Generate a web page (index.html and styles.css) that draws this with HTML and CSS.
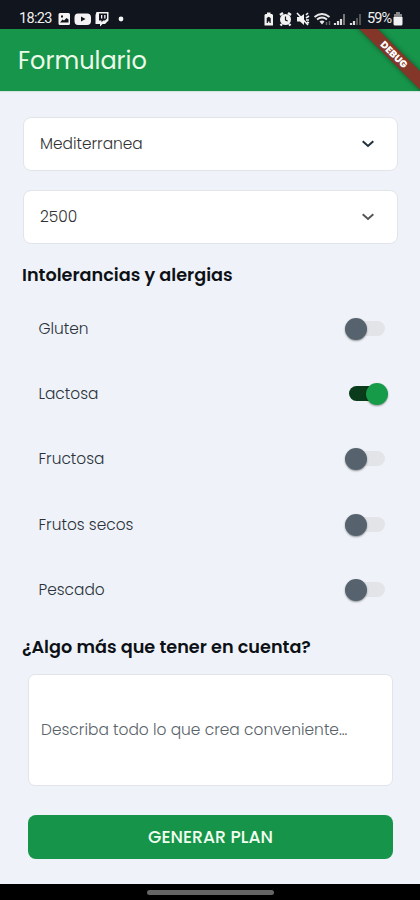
FILE: index.html
```
<!DOCTYPE html>
<html lang="es">
<head>
<meta charset="utf-8">
<meta name="viewport" content="width=device-width, initial-scale=1">
<title>Formulario</title>
<link rel="stylesheet" href="styles.css">
</head>
<body>
<div class="screen">
  <div class="status">
    <span class="clock">18:23</span>
    <svg class="notifications" width="70" height="16" viewBox="0 0 70 16">
      <path fill="#f4f4f4" fill-rule="evenodd" d="M2 2h8.500a1.500 1.500 0 0 1 1.500 1.500v9a1.500 1.500 0 0 1-1.500 1.500h-8.500a1.500 1.500 0 0 1-1.500-1.500v-9a1.500 1.500 0 0 1 1.500-1.500zM2 11.500h8.500v-3l-2-1.500-2.500 2.500-1.500-1zM3 4.500v2h2v-2z"/>
      <path fill="#f4f4f4" fill-rule="evenodd" d="M20 2.500h9q4 0 4 4v3.500q0 4-4 4h-9q-3.500 0-3.500-4v-3.500q0-4 3.500-4zM23 5.500v5l4.500-2.500z"/>
      <path fill="#f4f4f4" fill-rule="evenodd" d="M38.500 1h12v8.500l-3.500 3.500h-2.500l-2.500 2.500v-2.500h-4.500v-9zM41 2.500v7h2.500v1.800l1.800-1.800h1.700l2-2v-5zM43 4h1.300v3.500h-1.300zM46.200 4h1.300v3.500h-1.300z"/>
      <circle cx="63" cy="8" r="2.400" fill="#f4f4f4"/>
    </svg>
    <svg class="indicators" width="100" height="16" viewBox="0 0 100 16">
      <path fill="#f2f2f2" fill-rule="evenodd" d="M4 1.500h3.500v1.500h1.500l1 1v10.500h-8.500v-10.500l1-1h1.500zM3.700 7v5h1.200v-1.500h1.600v1.500h1.200v-5l-2-1.300z"/>
      <path d="M17 4l3-2M25 2l3 2M19 13l-1.500 1.500M26 13l1.500 1.500" stroke="#f2f2f2" stroke-width="2.400"/>
      <circle cx="22.500" cy="8.500" r="5.500" fill="#f2f2f2"/><path d="M22.500 5.500v3.500l2.200 1" fill="none" stroke="#15191f" stroke-width="1.200"/>
      <path d="M34 6h3l4-3v11l-4-3.500h-3z" fill="#f2f2f2"/>
      <path d="M34 2l11 12M43 7l3-2M43 9h3M43 4l2-2M44 11l2 1" stroke="#f2f2f2" stroke-width="1.600"/>
      <path d="M51.500 6q7.500-6 15 0M54 8.500q5-4 10 0" fill="none" stroke="#e8e8e8" stroke-width="1.900"/>
      <path d="M56.500 10.500q2.500-2 5 0l-2.500 3z" fill="#e8e8e8"/><path d="M63.500 14v-3M66.500 14v-4" stroke="#666" stroke-width="1.500"/>
      <path d="M72 14v-2M75 14v-4M78 14v-6" stroke="#ddd" stroke-width="2.200"/><path d="M81 14v-11" stroke="#777" stroke-width="2"/>
      <path d="M88 14v-2M91 14v-4" stroke="#ddd" stroke-width="2.200"/><path d="M94 14v-7M97 14v-11" stroke="#555" stroke-width="2"/>
    </svg>
    <span class="percent">59%</span>
    <svg class="battery" width="10" height="14" viewBox="0 0 10 14"><path fill="#888" d="M3 0h4v2h2v5h-8v-5h2z"/><path fill="#f2f2f2" d="M.5 5h9v7q0 1.500-1.500 1.500h-6q-1.500 0-1.500-1.500z"/></svg>
  </div>

  <header class="appbar">
    <h1 class="title">Formulario</h1>
    <div class="banner"><span>DEBUG</span></div>
  </header>

  <main class="form">
    <div class="select"><span>Mediterranea</span><svg width="14" height="10" viewBox="0 0 14 10"><path d="M1.700 2.200L7 7l5.300-4.800" fill="none" stroke="#20303c" stroke-width="2"/></svg></div>
    <div class="select"><span>2500</span><svg width="14" height="10" viewBox="0 0 14 10"><path d="M1.700 2.200L7 7l5.300-4.800" fill="none" stroke="#555" stroke-width="2"/></svg></div>

    <h2 class="heading">Intolerancias y alergias</h2>
    <div class="rows">
      <div class="row"><span>Gluten</span><i class="switch"></i></div>
      <div class="row"><span>Lactosa</span><i class="switch on"></i></div>
      <div class="row"><span>Fructosa</span><i class="switch"></i></div>
      <div class="row"><span>Frutos secos</span><i class="switch"></i></div>
      <div class="row"><span>Pescado</span><i class="switch"></i></div>
    </div>

    <h2 class="heading extra">¿Algo más que tener en cuenta?</h2>
    <div class="notes"><span>Describa todo lo que crea conveniente...</span></div>
    <div class="submit"><span>GENERAR PLAN</span></div>
  </main>
  <div class="navbar"><i class="pill"></i></div>
</div>
</body>
</html>
```
FILE: styles.css
```
* { box-sizing: border-box; }
body { margin: 0; font-family: Poppins, Inter, "Open Sans", sans-serif; }
h1, h2 { margin: 0; }
span, h1, h2 { white-space: nowrap; }
svg { flex: none; }

.screen { width: 420px; height: 900px; display: flex; flex-direction: column; background: #eff3f9; overflow: hidden; }

.status { height: 29px; flex: none; display: flex; align-items: center; padding: 8px 17px 0 19px; background: #11151d; color: #f0f0f0; font-family: Roboto, sans-serif; font-size: 14.5px; }
.clock { width: 39px; letter-spacing: -.7px; }
.indicators { margin-left: 135px; }
.percent { width: 25px; margin-left: 4px; letter-spacing: -.9px; }
.battery { margin-left: 1px; }

.appbar { position: relative; height: 62px; flex: none; display: flex; align-items: center; padding: 1px 0 0 18px; background: #17954b; overflow: hidden; box-shadow: 0 1px 1px #d5e4df; }
.title { font-size: 24px; font-weight: 400; line-height: 30px; color: #edfbe9; }
.banner { position: absolute; left: 344px; top: 19px; width: 100px; height: 13px; display: flex; align-items: center; justify-content: center; background: #843629; box-shadow: 0 0 5px rgba(0, 0, 0, .45); transform: rotate(45deg); color: #fff; font-size: 9.8px; font-weight: 800; }

.form { flex: 1; display: flex; flex-direction: column; padding: 26px 22px 0 23px; }
.select { height: 54px; flex: none; display: flex; align-items: center; justify-content: space-between; margin-bottom: 19px; padding: 0 22px 0 16px; border: 1.5px solid #e1e4e8; border-radius: 8px; background: #fff; font-size: 15.4px; font-weight: 300; color: #333; }
.select span { padding-bottom: 2px; }

.heading { font-size: 17.65px; font-weight: 600; line-height: 24px; color: #0d1116; margin-left: -1px; }
.rows { display: flex; flex-direction: column; margin-top: 9px; }
.row { height: 65.3px; display: flex; align-items: center; justify-content: space-between; padding: 0 11px 0 15.500px; font-size: 15.4px; font-weight: 300; color: #2b323a; }
.row span { padding-bottom: 1px; }
.switch { position: relative; width: 39px; height: 22px; }
.switch::before { content: ""; position: absolute; left: 1px; top: 3px; width: 36px; height: 15px; border-radius: 8px; background: #e2e4e8; }
.switch::after { content: ""; position: absolute; left: -3px; top: 0; width: 22px; height: 22px; border-radius: 50%; background: #56636f; box-shadow: 0 1px 2px rgba(0, 0, 0, .4); }
.switch.on::before { background: #0a3b1b; }
.switch.on::after { left: 18px; background: #169b49; }

.extra { margin-top: 12.5px; }
.notes { height: 112px; flex: none; display: flex; align-items: center; margin: 15px 5px 0; padding-left: 12px; border: 1.5px solid #e1e4ea; border-radius: 7px; background: #fff; font-size: 15.45px; font-weight: 300; color: #59636a; }
.notes span { padding-bottom: 1px; }
.submit { height: 44px; flex: none; display: flex; align-items: center; justify-content: center; margin: 29.5px 5px 0; border-radius: 8px; background: #16954a; color: #f2fff0; font-size: 17.3px; font-weight: 500; }

.navbar { height: 16px; flex: none; display: flex; justify-content: center; padding-top: 6px; background: #000; }
.pill { width: 127px; height: 5px; border-radius: 3px; background: #656565; }
```
